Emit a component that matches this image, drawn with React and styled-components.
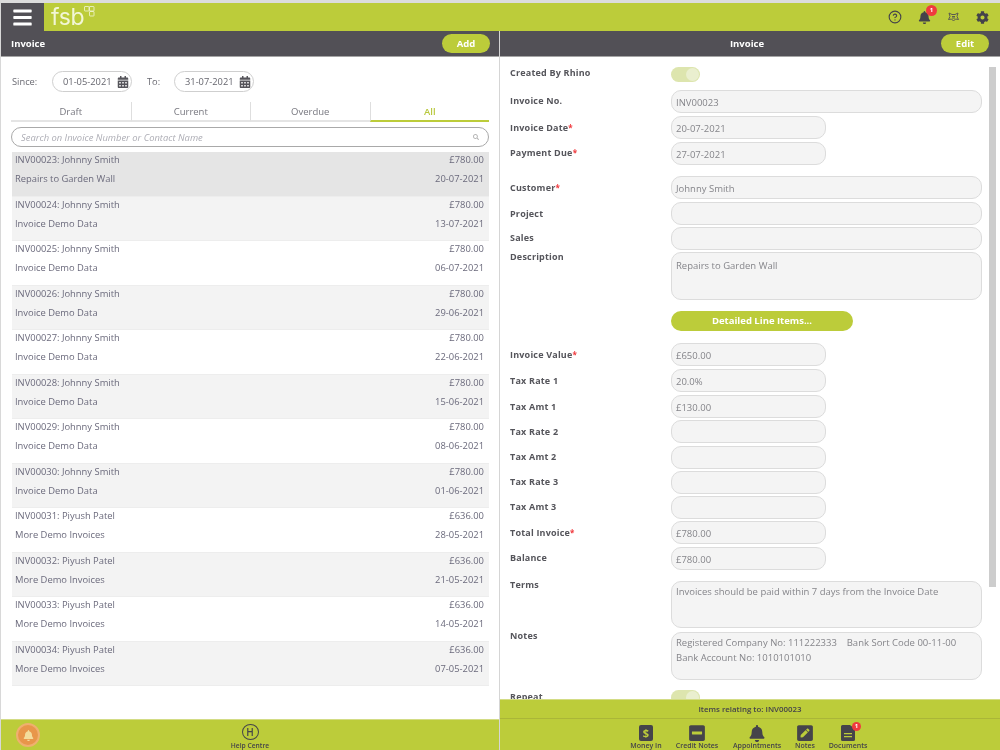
import React from "react"
import styled, { createGlobalStyle } from "styled-components"
import { FaBell, FaCog, FaCalendarAlt, FaMinusSquare, FaPenSquare, FaSearch, FaBars } from "react-icons/fa"
import { CircleHelp } from "lucide-react"

const GREEN = "#bccc3a"
const DARK = "#525056"

const invoices = [
  ["INV00023: Johnny Smith", "£780.00", "Repairs to Garden Wall", "20-07-2021"],
  ["INV00024: Johnny Smith", "£780.00", "Invoice Demo Data", "13-07-2021"],
  ["INV00025: Johnny Smith", "£780.00", "Invoice Demo Data", "06-07-2021"],
  ["INV00026: Johnny Smith", "£780.00", "Invoice Demo Data", "29-06-2021"],
  ["INV00027: Johnny Smith", "£780.00", "Invoice Demo Data", "22-06-2021"],
  ["INV00028: Johnny Smith", "£780.00", "Invoice Demo Data", "15-06-2021"],
  ["INV00029: Johnny Smith", "£780.00", "Invoice Demo Data", "08-06-2021"],
  ["INV00030: Johnny Smith", "£780.00", "Invoice Demo Data", "01-06-2021"],
  ["INV00031: Piyush Patel", "£636.00", "More Demo Invoices", "28-05-2021"],
  ["INV00032: Piyush Patel", "£636.00", "More Demo Invoices", "21-05-2021"],
  ["INV00033: Piyush Patel", "£636.00", "More Demo Invoices", "14-05-2021"],
  ["INV00034: Piyush Patel", "£636.00", "More Demo Invoices", "07-05-2021"],
]

const GlobalStyle = createGlobalStyle`
  html, body { margin: 0; padding: 0; background: #fff; overflow: hidden; }
  * { box-sizing: border-box; }
`

const Page = styled.div`
  width: 1000px;
  height: 750px;
  display: flex;
  flex-direction: column;
  overflow: hidden;
  background: #fff;
  border-top: 3px solid #dcdcdc;
  border-left: 1px solid #d8d8d8;
  font-family: "Open Sans", "Liberation Sans", sans-serif;
  font-size: 9.5px;
  color: #6a6a72;
  filter: blur(0.6px);
`
const TopBar = styled.header`
  height: 28px;
  flex: none;
  display: flex;
  align-items: center;
  background: ${GREEN};
`
const MenuButton = styled.div`
  width: 43px;
  height: 100%;
  display: flex;
  align-items: center;
  justify-content: center;
  background: ${DARK};
  color: #fff;
  font-size: 21px;
`
const Logo = styled.div`
  position: relative;
  margin-left: 7px;
  font-family: "Inter", "Open Sans", sans-serif;
  font-weight: 400;
  font-size: 23px;
  line-height: 28px;
  letter-spacing: -0.3px;
  color: #f2f6d6;
`
const LogoMark = styled.svg`
  position: absolute;
  top: 3px;
  right: -11px;
`
const TopIcons = styled.div`
  margin-left: auto;
  display: flex;
  align-items: center;
  gap: 16px;
  padding-right: 11px;
  color: #44434a;
`
const IconWrap = styled.div`
  position: relative;
  display: flex;
`
const Badge = styled.span`
  position: absolute;
  top: ${p => p.$top}px;
  right: ${p => p.$right}px;
  width: ${p => p.$size}px;
  height: ${p => p.$size}px;
  border-radius: 50%;
  background: #f03a3e;
  color: #fff;
  font-size: 6px;
  font-weight: 700;
  line-height: ${p => p.$size}px;
  text-align: center;
`
const Columns = styled.div`
  flex: 1;
  min-height: 0;
  display: grid;
  grid-template-columns: 498px 501px;
`
const Panel = styled.section`
  position: relative;
  min-height: 0;
  display: flex;
  flex-direction: column;
  border-left: ${p => (p.$right ? "1px solid #d5d5d5" : "none")};
`
const TitleBar = styled.div`
  height: 26px;
  flex: none;
  display: grid;
  grid-template-columns: 1fr auto 1fr;
  align-items: center;
  padding: ${p => (p.$right ? "0 11px 0 5px" : "0 9px 0 10px")};
  background: ${DARK};
  border-bottom: 1px solid #a5a5a5;
  color: #fff;
  font-size: 9.5px;
  font-weight: 700;
`
const BarTitle = styled.div`
  grid-column: ${p => (p.$center ? 2 : 1)};
`
const PillButton = styled.div`
  grid-column: 3;
  justify-self: end;
  width: 48px;
  height: 19px;
  border-radius: 10px;
  background: ${GREEN};
  color: #fff;
  font-weight: 700;
  font-size: 9.5px;
  line-height: 19px;
  text-align: center;
`
const FilterRow = styled.div`
  display: flex;
  align-items: center;
  height: 21px;
  margin: 14px 0 0 11px;
  font-size: 9.3px;
`
const FilterLabel = styled.span`
  width: ${p => p.$width}px;
`
const DatePill = styled.div`
  width: 80px;
  height: 21px;
  display: flex;
  align-items: center;
  justify-content: space-between;
  padding: 0 2px 0 10px;
  border: 1px solid #cfcfcf;
  border-radius: 11px;
  color: #66666e;
  font-size: 9.3px;
  svg { color: #55545a; font-size: 12px; }
`
const DateSpacer = styled.span`
  width: 15px;
`
const Tabs = styled.div`
  display: grid;
  grid-template-columns: repeat(4, 1fr);
  height: 20px;
  margin: 10px 10px 0 10px;
`
const Tab = styled.div`
  display: flex;
  align-items: center;
  justify-content: center;
  border-bottom: 2px solid ${p => (p.$active ? GREEN : "#e4e4e4")};
  border-left: ${p => (p.$first ? "none" : "1px solid #dedede")};
  color: ${p => (p.$active ? "#b8c83e" : "#77777f")};
  font-size: 9.5px;
  font-weight: ${p => (p.$active ? 600 : 400)};
`
const SearchBox = styled.div`
  display: flex;
  align-items: center;
  justify-content: space-between;
  height: 20px;
  margin: 5px 10px 0 10px;
  padding: 0 9px;
  border: 1px solid #a9a9a9;
  border-radius: 10px;
  color: #adadb5;
  font-size: 9.4px;
  font-style: italic;
  svg { font-size: 6px; color: #b5b5b5; }
`
const InvoiceList = styled.div`
  margin: 5px 10px 0 11px;
`
const InvoiceRow = styled.div`
  height: 44.5px;
  padding: 1px 5px 0 3px;
  background: ${p => (p.$selected ? "#e5e5e5" : p.$odd ? "#f3f3f3" : "#fff")};
  border-bottom: 1px solid #ededed;
`
const InvoiceLine = styled.div`
  display: flex;
  justify-content: space-between;
  height: 19px;
  line-height: 13px;
  font-size: 9.4px;
  color: #6b6a7c;
`
const Footer = styled.footer`
  flex: none;
  margin-top: auto;
  height: ${p => p.$height}px;
  background: ${GREEN};
  color: #45444a;
`
const HelpFooter = styled(Footer)`
  position: relative;
  display: flex;
  justify-content: center;
  padding-top: 4px;
  border-top: 1px solid #d3dc85;
`
const AlertButton = styled.div`
  position: absolute;
  left: 15px;
  top: 3px;
  width: 24px;
  height: 24px;
  display: flex;
  align-items: center;
  justify-content: center;
  border-radius: 50%;
  background: #e8964a;
  border: 2px solid #efb06f;
  color: #f3dc9c;
  font-size: 11px;
`
const HelpItem = styled.div`
  display: flex;
  flex-direction: column;
  align-items: center;
  gap: 1px;
  font-size: 6.7px;
  font-weight: 600;
`
const HelpCircle = styled.div`
  width: 17px;
  height: 17px;
  border: 1.5px solid #45444a;
  border-radius: 50%;
  text-align: center;
  font-size: 10px;
  line-height: 14px;
  font-weight: 600;
`
const FormScroll = styled.div`
  flex: 1;
  min-height: 0;
  overflow: hidden;
  padding: 5px 0 0 10px;
`
const ScrollThumb = styled.div`
  position: absolute;
  top: 36px;
  right: 4px;
  width: 7px;
  height: 520px;
  background: #cdcdcd;
`
const FormRow = styled.div`
  display: grid;
  grid-template-columns: 161px 1fr;
  margin-top: ${p => p.$gap || 0}px;
  margin-right: 8px;
`
const Label = styled.div`
  margin-top: ${p => p.$top ?? 5}px;
  color: #55555b;
  font-size: 9px;
  font-weight: 700;
  letter-spacing: 0.2px;
  em { color: #f03a3e; font-style: normal; font-size: 8px; }
`
const Field = styled.div`
  width: ${p => (p.$small ? "155px" : "311px")};
  height: ${p => p.$height || 23}px;
  padding: ${p => (p.$height ? `${p.$pad ?? 5}px 4px` : "0 4px")};
  line-height: ${p => (p.$height ? "15px" : "23px")};
  border: 1px solid #dcdcdc;
  border-radius: 10px;
  background: #f4f4f4;
  color: #85858a;
  font-size: 9.5px;
  white-space: pre-wrap;
`
const Toggle = styled.div`
  position: relative;
  width: 29px;
  height: 15px;
  margin-top: ${p => p.$top || 0}px;
  border-radius: 8px;
  background: #dde5ae;
  &::after {
    content: "";
    position: absolute;
    right: 1px;
    top: 1px;
    width: 13px;
    height: 13px;
    border-radius: 50%;
    background: #eaefcf;
  }
`
const WideButton = styled.div`
  width: 182px;
  height: 20px;
  border-radius: 10px;
  background: ${GREEN};
  color: #fff;
  font-size: 9.5px;
  font-weight: 700;
  line-height: 20px;
  text-align: center;
`
const ItemsHeading = styled.div`
  height: 20px;
  line-height: 19px;
  border-bottom: 1px solid #aab638;
  border-top: 1px solid #d3dc85;
  text-align: center;
  font-size: 7.9px;
  font-weight: 600;
`
const Shortcuts = styled.div`
  display: flex;
  justify-content: center;
  gap: 14px;
  padding: 6px 2px 0 0;
`
const Shortcut = styled.div`
  width: ${p => p.$width}px;
  display: flex;
  flex-direction: column;
  align-items: center;
  font-size: 7px;
  font-weight: 600;
  white-space: nowrap;
`
const IconBox = styled.div`
  position: relative;
  width: 16px;
  height: 16px;
  display: flex;
  align-items: center;
  justify-content: center;
  font-size: ${p => p.$size || 16}px;
`
const DollarBox = styled.div`
  width: 14px;
  height: 16px;
  border-radius: 2px;
  background: #45444a;
  color: ${GREEN};
  font-size: 11px;
  font-weight: 700;
  line-height: 16px;
  text-align: center;
`

const rows = [
  { label: "Invoice No.", value: "INV00023", gap: 8, top: 4 },
  { label: "Invoice Date", req: true, value: "20-07-2021", small: true, gap: 3 },
  { label: "Payment Due", req: true, value: "27-07-2021", small: true, gap: 3, top: 4 },
  { label: "Customer", req: true, value: "Johnny Smith", gap: 11, top: 5 },
  { label: "Project", gap: 3, top: 5 },
  { label: "Sales", gap: 2, top: 4 },
]
const moneyRows = [
  { label: "Invoice Value", req: true, value: "£650.00", small: true, gap: 12 },
  { label: "Tax Rate 1", value: "20.0%", small: true, gap: 3 },
  { label: "Tax Amt 1", value: "£130.00", small: true, gap: 3 },
  { label: "Tax Rate 2", small: true, gap: 2 },
  { label: "Tax Amt 2", small: true, gap: 3, top: 4 },
  { label: "Tax Rate 3", small: true, gap: 2, top: 4 },
  { label: "Tax Amt 3", small: true, gap: 2, top: 4 },
  { label: "Total Invoice", req: true, value: "£780.00", small: true, gap: 2 },
  { label: "Balance", value: "£780.00", small: true, gap: 3, top: 4 },
]

const FormField = ({ label, req, value, small, gap, top }) => (
  <FormRow $gap={gap}>
    <Label $top={top}>{label}{req && <em>*</em>}</Label>
    <Field $small={small}>{value}</Field>
  </FormRow>
)

const App = () => (
  <Page>
    <GlobalStyle />
    <TopBar>
      <MenuButton><FaBars /></MenuButton>
      <Logo>
        fsb
        <LogoMark width="11" height="11" viewBox="0 0 11 11" fill="none" stroke="#f2f6d6" strokeWidth="0.8">
          <rect x="0.5" y="0.5" width="4.500" height="4.500" rx="0.5" />
          <rect x="5.500" y="0.5" width="4.500" height="4.500" rx="0.5" />
          <rect x="5.500" y="5.500" width="4.500" height="4.500" rx="0.5" />
        </LogoMark>
      </Logo>
      <TopIcons>
        <IconWrap><CircleHelp size={14} strokeWidth={1.9} /></IconWrap>
        <IconWrap>
          <FaBell size={13} />
          <Badge $top={-6} $right={-6} $size={11}>1</Badge>
        </IconWrap>
        <IconWrap>
          <svg width="13" height="12" viewBox="0 0 13 12" fill="none" stroke="#5b5b50" strokeWidth="1">
            <path d="M2 2l3 1.500h3L11 2l-1 3.500 1.500 3-3-.5-2 2-2-2-3 .5L3 5.500z" />
            <path d="M5 5.500h3M5 7h3" />
          </svg>
        </IconWrap>
        <IconWrap><FaCog size={13} /></IconWrap>
      </TopIcons>
    </TopBar>
    <Columns>
      <Panel>
        <TitleBar>
          <BarTitle>Invoice</BarTitle>
          <PillButton>Add</PillButton>
        </TitleBar>
        <FilterRow>
          <FilterLabel $width={40}>Since:</FilterLabel>
          <DatePill>01-05-2021<FaCalendarAlt /></DatePill>
          <DateSpacer />
          <FilterLabel $width={27}>To:</FilterLabel>
          <DatePill>31-07-2021<FaCalendarAlt /></DatePill>
        </FilterRow>
        <Tabs>
          <Tab $first>Draft</Tab>
          <Tab>Current</Tab>
          <Tab>Overdue</Tab>
          <Tab $active>All</Tab>
        </Tabs>
        <SearchBox>
          Search on Invoice Number or Contact Name
          <FaSearch />
        </SearchBox>
        <InvoiceList>
          {invoices.map((inv, i) => (
            <InvoiceRow key={inv[0]} $selected={i === 0} $odd={i % 2 === 1}>
              <InvoiceLine><span>{inv[0]}</span><span>{inv[1]}</span></InvoiceLine>
              <InvoiceLine><span>{inv[2]}</span><span>{inv[3]}</span></InvoiceLine>
            </InvoiceRow>
          ))}
        </InvoiceList>
        <HelpFooter $height={31}>
          <AlertButton><FaBell /></AlertButton>
          <HelpItem>
            <HelpCircle>H</HelpCircle>
            Help Centre
          </HelpItem>
        </HelpFooter>
      </Panel>
      <Panel $right>
        <TitleBar $right>
          <BarTitle $center>Invoice</BarTitle>
          <PillButton>Edit</PillButton>
        </TitleBar>
        <FormScroll>
          <FormRow>
            <Label $top={4}>Created By Rhino</Label>
            <Toggle $top={5} />
          </FormRow>
          {rows.map(r => <FormField key={r.label} {...r} />)}
          <FormRow $gap={2}>
            <Label $top={-2}>Description</Label>
            <Field $height={48}>Repairs to Garden Wall</Field>
          </FormRow>
          <FormRow $gap={11}>
            <span />
            <WideButton>Detailed Line Items...</WideButton>
          </FormRow>
          {moneyRows.map(r => <FormField key={r.label} {...r} />)}
          <FormRow $gap={11}>
            <Label $top={-3}>Terms</Label>
            <Field $height={47} $pad={2}>Invoices should be paid within 7 days from the Invoice Date</Field>
          </FormRow>
          <FormRow $gap={4}>
            <Label $top={-3}>Notes</Label>
            <Field $height={48} $pad={2}>{"Registered Company No: 111222333    Bank Sort Code 00-11-00\nBank Account No: 1010101010"}</Field>
          </FormRow>
          <FormRow $gap={10}>
            <Label $top={0}>Repeat</Label>
            <Toggle />
          </FormRow>
        </FormScroll>
        <ScrollThumb />
        <Footer $height={51}>
          <ItemsHeading>Items relating to: INV00023</ItemsHeading>
          <Shortcuts>
            <Shortcut $width={30}>
              <IconBox><DollarBox>$</DollarBox></IconBox>
              Money In
            </Shortcut>
            <Shortcut $width={44}>
              <IconBox $size={18}><FaMinusSquare /></IconBox>
              Credit Notes
            </Shortcut>
            <Shortcut $width={48}>
              <IconBox $size={17}><FaBell /></IconBox>
              Appointments
            </Shortcut>
            <Shortcut $width={20}>
              <IconBox $size={18}><FaPenSquare /></IconBox>
              Notes
            </Shortcut>
            <Shortcut $width={38}>
              <IconBox>
                <svg width="14" height="16" viewBox="0 0 14 16" fill="#45444a">
                  <path d="M1.500 0H9l5 4v10.500a1.500 1.500 0 0 1-1.500 1.500h-11A1.500 1.500 0 0 1 0 14.500v-13A1.500 1.500 0 0 1 1.500 0z" />
                  <path d="M3 8h8v1.300H3zM3 11h8v1.300H3z" fill={GREEN} />
                </svg>
                <Badge $top={-3} $right={-5} $size={9}>1</Badge>
              </IconBox>
              Documents
            </Shortcut>
          </Shortcuts>
        </Footer>
      </Panel>
    </Columns>
  </Page>
)

export default App
